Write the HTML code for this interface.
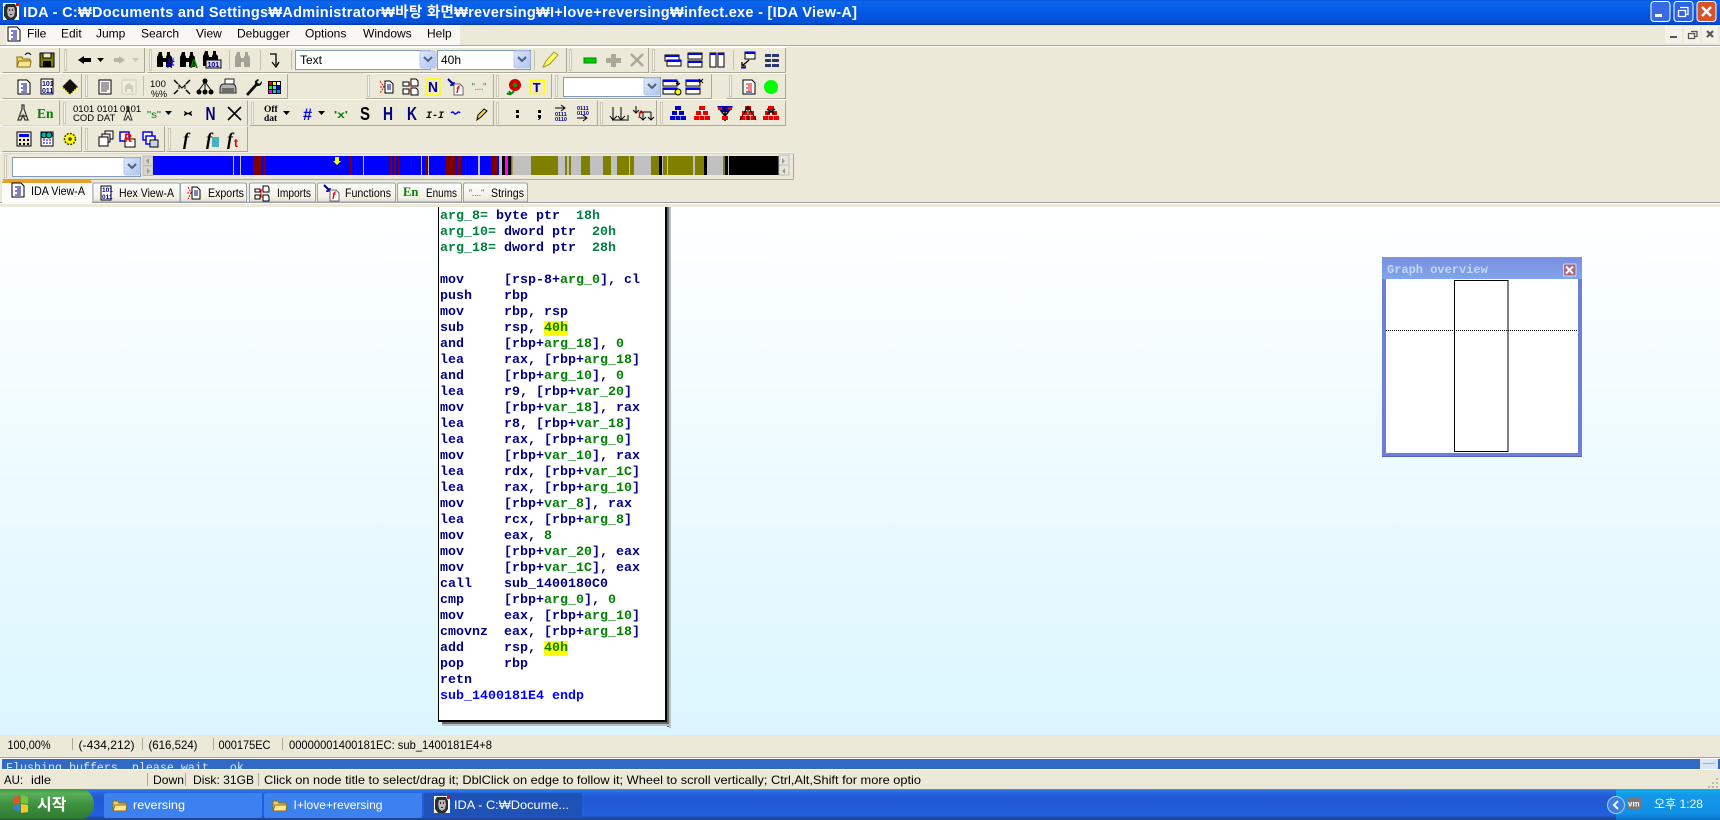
<!DOCTYPE html>
<html><head><meta charset="utf-8"><title>IDA</title>
<style>
html,body{margin:0;padding:0;width:1720px;height:820px;overflow:hidden;background:#ece9d8}
svg{position:absolute;left:0;top:0}
text{font-family:"Liberation Sans","Noto Sans CJK KR",sans-serif;font-size:12px;fill:#000}
.g{fill:#ece9d8;stroke:#aca899;stroke-width:1}
.s{fill:none;stroke:#aca899}
.tab{fill:url(#tabg);stroke:#93a5b5}
.m{font-family:"Liberation Mono",monospace;font-weight:bold}
.w{fill:#fff}
pre{position:absolute;margin:0;left:440px;top:209px;height:511px;overflow:hidden;font:bold 13.333px/16px "Liberation Mono",monospace;color:#000080}
pre i{font-style:normal;color:#007f00}
pre u{text-decoration:none;color:#007f3f}
pre b{color:#007f00;background:#ff0;font-weight:bold}
pre em{font-style:normal;color:#0000ff}
</style></head><body>
<svg width="1720" height="820" viewBox="0 0 1720 820" xmlns="http://www.w3.org/2000/svg">
<defs>
<linearGradient id="ttl" x1="0" y1="0" x2="0" y2="1"><stop offset="0" stop-color="#0a58d8"/><stop offset=".1" stop-color="#0a66ee"/><stop offset=".6" stop-color="#0355e0"/><stop offset=".9" stop-color="#0450d4"/><stop offset="1" stop-color="#0038b0"/></linearGradient>
<linearGradient id="cv" x1="0" y1="0" x2="0" y2="1"><stop offset="0" stop-color="#ffffff"/><stop offset="1" stop-color="#dbf6ff"/></linearGradient>
<linearGradient id="tabg" x1="0" y1="0" x2="0" y2="1"><stop offset="0" stop-color="#fdfdfb"/><stop offset=".8" stop-color="#f2f0e6"/><stop offset="1" stop-color="#dcd9c8"/></linearGradient>
<linearGradient id="tb" x1="0" y1="0" x2="0" y2="1"><stop offset="0" stop-color="#3c8af0"/><stop offset=".1" stop-color="#2a67dc"/><stop offset=".3" stop-color="#2158d6"/><stop offset=".85" stop-color="#2460dc"/><stop offset=".95" stop-color="#1c47a8"/><stop offset="1" stop-color="#444"/></linearGradient>
<linearGradient id="st" x1="0" y1="0" x2="0" y2="1"><stop offset="0" stop-color="#3b9a3b"/><stop offset=".15" stop-color="#5aae5a"/><stop offset=".5" stop-color="#3f923f"/><stop offset="1" stop-color="#2f7a34"/></linearGradient>
<linearGradient id="tray" x1="0" y1="0" x2="0" y2="1"><stop offset="0" stop-color="#0fb0ee"/><stop offset=".2" stop-color="#1298e8"/><stop offset=".8" stop-color="#1290e6"/><stop offset="1" stop-color="#0c6ec4"/></linearGradient>
<linearGradient id="arr" x1="0" y1="0" x2="1" y2="1"><stop offset="0" stop-color="#dfe8fb"/><stop offset="1" stop-color="#aec3ee"/></linearGradient>
<linearGradient id="gov" x1="0" y1="0" x2="0" y2="1"><stop offset="0" stop-color="#7a8ee0"/><stop offset="1" stop-color="#7fa6ea"/></linearGradient>
<g id="ar"><rect x="0" y="0" width="16" height="17" rx="2" fill="url(#arr)" stroke="#b6c8ee"/><path d="M4 6l4 4 4-4" fill="none" stroke="#4d6185" stroke-width="2"/></g>
<g id="doc"><path d="M-6-7h9l3 3v11h-12z" fill="#fff" stroke="#000"/><path d="M-3-3h6M-1-1h4M-3 1h6M-1 3h4M-3 5h6" stroke="#00008b"/></g>
<g id="bin"><path d="M-6-8h3v3l1 2v10h-6v-10l1-2zM2-8h3v3l2 2v10h-6v-10l1-2z" fill="#000"/><rect x="-3" y="-2" width="5" height="4" fill="#000"/></g>
<g id="fold"><path d="M-7-3h5l1 2h7v8h-13z" fill="#f6cf52" stroke="#8a6d1a"/><path d="M-7 7l2-6h12l-1 6z" fill="#ffe88f" stroke="#8a6d1a"/></g>
<g id="win"><rect x="-7" y="-6" width="14" height="6" fill="#fff" stroke="#000"/><rect x="-7" y="-6" width="14" height="2" fill="#00f"/></g>
<g id="tree"><rect x="-3" y="-7" width="6" height="4"/><rect x="-6" y="-2" width="5" height="4"/><rect x="1" y="-2" width="5" height="4"/><rect x="-8" y="3" width="5" height="4"/><rect x="-2.500" y="3" width="5" height="4"/><rect x="3" y="3" width="5" height="4"/></g>
<g id="ida"><rect x="0" y="0" width="16" height="17" fill="#fff"/><path d="M3 1h9l2 4v8l-3 4h-7l-3-4v-9z" fill="#2b2b2b"/><path d="M5 4h6l1 4-1 5-3 2-3-2-1-5z" fill="#b8b8b8"/><path d="M6 6h1v2h-1zM9 6h1v2h-1zM7 11h2v1h-2z" fill="#222"/><rect x="13" y="0" width="3" height="3" fill="#f00"/></g>
</defs>

<!-- title bar -->
<rect width="1720" height="25" fill="url(#ttl)"/>
<use href="#ida" x="3" y="3"/>
<text x="23" y="17" style="fill:#fff;font-weight:bold;font-size:14.500px" textLength="834" lengthAdjust="spacing">IDA - C:₩Documents and Settings₩Administrator₩바탕 화면₩reversing₩I+love+reversing₩infect.exe - [IDA View-A]</text>
<rect x="1651" y="1.500" width="19" height="20" rx="3" fill="#3b69df" stroke="#fff"/><rect x="1655" y="14" width="7" height="3" fill="#fff"/>
<rect x="1674" y="1.500" width="19" height="20" rx="3" fill="#2d62e0" stroke="#fff"/><path d="M1680 7.500h8v7h-2.500M1678.500 10.500h7v6h-7z" fill="none" stroke="#fff" stroke-width="1.300"/>
<rect x="1697" y="1.500" width="19" height="20" rx="3" fill="#d8522a" stroke="#fff"/><path d="M1702 7l9 9M1711 7l-9 9" stroke="#fff" stroke-width="2.400"/>

<!-- menu -->
<rect x="0" y="25" width="1720" height="20" fill="#ece9d8"/>
<rect x="6" y="25" width="454" height="20" fill="#f8f7f2"/>
<use href="#doc" x="14" y="34"/>
<text x="27" y="37.500">File</text><text x="61" y="37.500">Edit</text><text x="96" y="37.500">Jump</text><text x="141" y="37.500">Search</text><text x="196" y="37.500">View</text><text x="237" y="37.500">Debugger</text><text x="305" y="37.500">Options</text><text x="363" y="37.500">Windows</text><text x="427" y="37.500">Help</text>
<rect x="1665" y="26" width="17" height="17" fill="#f4f2e8"/><rect x="1684" y="26" width="16" height="17" fill="#f4f2e8"/><rect x="1702" y="26" width="16" height="17" fill="#f4f2e8"/>
<rect x="1670" y="36" width="7" height="2" fill="#555"/>
<path d="M1691 31.500h6v5h-2M1688.500 33.500h6v5h-6z" fill="none" stroke="#555" stroke-width="1.300"/>
<path d="M1707 31l6 6M1713 31l-6 6" stroke="#555" stroke-width="2.200"/>
<rect x="0" y="45" width="1720" height="1" fill="#a8a79d"/><rect x="0" y="46" width="1720" height="1" fill="#fff"/>

<!-- toolbar groups -->
<g fill="none" stroke="#aca899">
<path d="M59.500 47.500V72.500H2.500"/>
<path d="M144.500 47.500V72.500H62.500M566.500 47.500V72.500H147.500M648.500 47.500V72.500H567.500M785.500 47.500V72.500H650.500"/>
<path d="M81.500 73.500V98.500H2.500M287.500 73.500V98.500H83.500M493.500 73.500V98.500H365.500M551.500 73.500V98.500H494.500M711.500 73.500V98.500H553.500M785.500 73.500V98.500H726.500"/>
<path d="M59.500 100.500V125.500H2.500M247.500 100.500V125.500H61.500M493.500 100.500V125.500H249.500M597.500 100.500V125.500H494.500M656.500 100.500V125.500H598.500M785.500 100.500V125.500H657.500"/>
<path d="M81.500 126.500V151.500H2.500M164.500 126.500V151.500H83.500M247.500 126.500V151.500H166.500"/>
<path d="M793.500 153.500V179.500H2.500M793.500 153.500H2.500"/>
</g>
<g stroke="#fff" fill="none">
<path d="M0 47.500H786M0 73.500H288M365 73.500H786M0 99.500H786M0 126H248M0 153H794"/>
</g>
<!-- grippers -->
<g fill="#f6f5ee" stroke="#cbc8b8" stroke-width="1">
<rect x="64.500" y="49.500" width="2" height="21"/><rect x="149.500" y="49.500" width="2" height="21"/><rect x="569.500" y="49.500" width="2" height="21"/><rect x="652.500" y="49.500" width="2" height="21"/>
<rect x="85.500" y="75.500" width="2" height="21"/><rect x="367.500" y="75.500" width="2" height="21"/><rect x="496.500" y="75.500" width="2" height="21"/><rect x="555.500" y="75.500" width="2" height="21"/><rect x="729.500" y="75.500" width="2" height="21"/>
<rect x="63.500" y="102.500" width="2" height="21"/><rect x="251.500" y="102.500" width="2" height="21"/><rect x="496.500" y="102.500" width="2" height="21"/><rect x="600.500" y="102.500" width="2" height="21"/><rect x="660.500" y="102.500" width="2" height="21"/>
<rect x="85.500" y="128.500" width="2" height="21"/><rect x="168.500" y="128.500" width="2" height="21"/>
<rect x="4.500" y="155.500" width="2" height="22"/>
</g>
<path d="M229.500 50V70M260.500 50V70M291.500 50V70M534.500 50V70M733.500 50V70M143.500 76V96" stroke="#c3c0ae"/>

<!-- row 1 icons -->
<g transform="translate(24,60)"><use href="#fold"/><path d="M1-5q3-4 6 0" fill="none" stroke="#000"/></g>
<g transform="translate(47,60)"><rect x="-7" y="-7" width="14" height="14" fill="#808000" stroke="#000"/><rect x="-4" y="-7" width="8" height="5" fill="#ece9d8" stroke="#000"/><rect x="-4" y="1" width="8" height="6" fill="#000"/></g>
<path d="M78 60l6-4v2h7v4h-7v2z"/><path d="M97 58h7l-3.500 4z"/>
<path d="M125 60l-6-4v2h-5v4h5v2z" fill="#b8b6a6"/><path d="M132 58h7l-3.500 4z" fill="#c8c6b6"/>
<use href="#bin" x="165" y="60"/><text x="166" y="68" class="m" style="fill:#0000e0;font-size:15px">#</text>
<use href="#bin" x="188" y="60"/><text x="190" y="68" class="m" style="fill:#008000;font-size:13px">A</text>
<use href="#bin" x="211" y="59"/><rect x="206" y="60" width="15" height="8" fill="#d8d8e8" stroke="#000"/><text x="207.500" y="67" style="font-size:7px;fill:#000080;font-weight:bold">101</text>
<g opacity=".3"><use href="#bin" x="243" y="60"/></g>
<path d="M270 54h6v11M272 62l4 5 3-5" fill="none" stroke="#000" stroke-width="1.300"/>
<!-- comboboxes row 1 -->
<rect x="295.500" y="50.500" width="135" height="19" fill="#fff" stroke="#7f9db9"/><text x="300" y="64">Text</text><use href="#ar" x="420" y="51"/>
<rect x="437.500" y="50.500" width="93" height="19" fill="#fff" stroke="#7f9db9"/><text x="441" y="64">40h</text><use href="#ar" x="514" y="51"/>
<path d="M543 67l3-6 8-9 4 3-8 9-6 3z" fill="#ffff60" stroke="#a09a30"/>
<rect x="584" y="58" width="12" height="5" fill="#0c0" stroke="#080"/>
<path d="M611 54h5v4h5v5h-5v4h-5v-4h-5v-5h5z" fill="#aca899"/>
<path d="M631 54l12 12M643 54l-12 12" stroke="#aca899" stroke-width="2.500"/>
<g transform="translate(671,60)"><use href="#win" x="1" y="1"/><use href="#win" x="3" y="6"/></g>
<g transform="translate(695,60)"><use href="#win" y="-1"/><use href="#win" y="7"/></g>
<g transform="translate(717,60)"><rect x="-7" y="-7" width="6" height="14" fill="#fff" stroke="#000"/><rect x="-7" y="-7" width="6" height="2" fill="#00f"/><rect x="1" y="-7" width="6" height="14" fill="#fff" stroke="#000"/><rect x="1" y="-7" width="6" height="2" fill="#00f"/></g>
<g transform="translate(748,60)"><rect x="-3" y="-8" width="10" height="7" fill="#fff" stroke="#000"/><rect x="-3" y="-8" width="10" height="2" fill="#00f"/><path d="M1 0l-7 6M-6 2v4h4" fill="none" stroke="#000" stroke-width="1.300"/><rect x="-7" y="7" width="5" height="1.500" fill="#00f"/></g>
<g transform="translate(772,60)" fill="#2a3a6a"><rect x="-7" y="-6" width="6" height="3"/><rect x="0" y="-6" width="7" height="3"/><rect x="-7" y="-1" width="6" height="3"/><rect x="0" y="-1" width="7" height="3"/><rect x="-7" y="4" width="6" height="3"/><rect x="0" y="4" width="7" height="3"/></g>

<!-- row 2 icons -->
<use href="#doc" x="24" y="87"/>
<g transform="translate(47,87)"><path d="M-6-8h12v15h-12z" fill="#fff" stroke="#000"/><text x="-5" y="-1" style="font-size:7px;font-weight:bold;fill:#000080">101</text><text x="-5" y="6" style="font-size:7px;font-weight:bold;fill:#000080">011</text></g>
<g transform="translate(70,87)"><path d="M0-8l8 8-8 8-8-8z" fill="#111"/><path d="M-8 0l8 8 8-8" fill="none" stroke="#ff0" stroke-width="1.500" stroke-dasharray="1.500 1"/></g>
<g transform="translate(105,87)"><rect x="-6" y="-7" width="12" height="14" fill="#fff" stroke="#000"/><path d="M-4-4h8M-4-2h8M-4 0h8M-4 2h8M-4 4h6" stroke="#444"/></g>
<g transform="translate(129,87)" opacity=".45"><rect x="-7" y="-7" width="14" height="14" fill="#f4f2e8" stroke="#aca899"/><path d="M-4 5v-6l4-3 4 3v6h-2v-3h-4v3z" fill="#aca899"/></g>
<text x="150" y="87" style="font-size:9.500px">100</text><text x="151" y="97" style="font-size:9px">%%</text>
<g transform="translate(182,87)" stroke="#000" fill="none"><path d="M-8-7l4 4M8-7l-4 4M-8 7l4-4M8 7l-4-4" stroke-width="1.500"/><path d="M-3 2v-4l3 3 3-3v4"/></g>
<g transform="translate(205,87)"><path d="M0-5l-6 8M0-5l6 8M0-5v8" stroke="#000" fill="none"/><circle cy="-6" r="2.500"/><circle cx="-6" cy="5" r="2.500"/><circle cy="5" r="2.500"/><circle cx="6" cy="5" r="2.500"/></g>
<g transform="translate(228,87)"><path d="M-8 2q0-5 4-5h8q4 0 4 5v4h-16z" fill="#b4b4b4" stroke="#222"/><rect x="-3" y="-8" width="9" height="5" fill="#fff" stroke="#222"/><path d="M-6 2h12M-6 4h12" stroke="#222"/></g>
<path d="M246 94l9-10v-3l3-2 1 1-2 2 2 2 3-3q0 4-3 5h-2l-9 10z" fill="#111"/>
<g transform="translate(268,81)"><rect width="13" height="13" fill="#000"/><rect x="1" y="1" width="3" height="3" fill="#f00"/><rect x="5" y="1" width="3" height="3" fill="#ff0"/><rect x="9" y="1" width="3" height="3" fill="#fff"/><rect x="1" y="5" width="3" height="3" fill="#0f0"/><rect x="5" y="5" width="3" height="3" fill="#0ff"/><rect x="9" y="5" width="3" height="3" fill="#00f"/><rect x="1" y="9" width="3" height="3" fill="#f0f"/><rect x="5" y="9" width="3" height="3" fill="#0cc"/><rect x="9" y="9" width="3" height="3" fill="#08f"/></g>
<g transform="translate(387,87)"><path d="M-7-6l4 6-4 6M-7 0h4" stroke="#e00" fill="none" stroke-dasharray="2 1"/><path d="M-2-6h5l3 3v9h-8z" fill="#fff" stroke="#000"/><path d="M0-2h4M0 0h4M0 2h4" stroke="#00008b"/></g>
<g transform="translate(410,87)"><path d="M-7-5h6v4h-6zM-7 2h6v5h-6z" fill="#fff" stroke="#000"/><path d="M1-8h5l2 2v5h-7zM1 1h5l2 2v5h-7z" fill="#fff" stroke="#000"/><path d="M-1-3h2M-1 4h2" stroke="#e00"/></g>
<rect x="426" y="79" width="14" height="16" fill="#ece9d8" stroke="#ff0" stroke-width="1.500"/><text x="428" y="92" style="fill:#000080;font-size:15px;font-weight:bold" textLength="10" lengthAdjust="spacingAndGlyphs">N</text>
<g transform="translate(456,87)"><path d="M-8-8l6 6" stroke="#00008b" stroke-width="2"/><path d="M-5-1v-1h3v-3" fill="none" stroke="#00008b" stroke-width="1.500"/><path d="M-2-3h6l3 3v8h-9z" fill="#fff" stroke="#666"/><text x="0" y="6" style="font-size:10px;fill:#e00;font-style:italic;font-weight:bold">f</text></g>
<text x="472" y="90" style="fill:#008000;font-size:10px" textLength="14" lengthAdjust="spacingAndGlyphs">"...."</text>
<g transform="translate(515,87)"><circle cy="-2" r="6" fill="#c00"/><circle cy="-2" r="2" fill="#0a0"/><path d="M-1 4q-4 5-7 2M-6 4l2 3" fill="none" stroke="#080" stroke-width="2"/></g>
<rect x="530.500" y="80.500" width="14" height="13" fill="#ece9d8" stroke="#ff0" stroke-width="1.500"/><text x="532.500" y="92" class="m" style="fill:#000080;font-size:14px">T</text>
<rect x="563.500" y="77.500" width="97" height="19" fill="#fff" stroke="#7f9db9"/><use href="#ar" x="644" y="78"/>
<g transform="translate(670,87)"><use href="#win" x="0" y="-1"/><use href="#win" x="0" y="7"/><path d="M8-6v4M6-4l2 2 2-2" stroke="#000" fill="none"/><ellipse cx="8" cy="5" rx="3" ry="3" fill="#ff0" stroke="#000"/></g>
<g transform="translate(693,87)"><use href="#win" x="0" y="-1"/><use href="#win" x="0" y="7"/><path d="M6-8l4 4M10-8l-4 4" stroke="#000"/></g>
<g transform="translate(749,87)"><use href="#doc"/><path d="M-3-3h6M-1-1h4M-3 1h6M-1 3h4" stroke="#e00"/></g>
<circle cx="771" cy="87" r="7" fill="#00ff00"/>

<!-- row 3 icons -->
<g transform="translate(23,113)" fill="none" stroke="#333" stroke-width="1.200"><path d="M-1-8h2v4l4 11h-3l-2-5-2 5h-3l4-11zM-4 3h8"/></g>
<text x="37" y="118" style="font-family:'Liberation Serif',serif;font-weight:bold;font-size:13.500px;fill:#008000">En</text>
<text x="73" y="112" style="font-size:9.500px">0101</text><text x="73" y="121" style="font-size:9.500px">COD</text><text x="97" y="112" style="font-size:9.500px">0101</text><text x="97" y="121" style="font-size:9.500px">DAT</text><text x="120" y="112" style="font-size:9.500px">0101</text>
<path d="M127 107h2v4l3 9h-2l-2-4-2 4h-2l3-9z" fill="none" stroke="#333"/>
<text x="147" y="118" style="fill:#008000;font-size:10px" textLength="14" lengthAdjust="spacingAndGlyphs">"s"</text><path d="M165 111h7l-3.500 4z"/>
<path d="M184 111l2 1 2 1 2-1 2-1v1l-1 1 1 2v1l-2-1-2-1-2 1-2 1v-1l1-2-1-1z"/>
<text x="205.500" y="120" style="fill:#000080;font-size:18px;font-weight:bold" textLength="10" lengthAdjust="spacingAndGlyphs">N</text>
<path d="M228 107l13 13M241 107l-13 13" stroke="#000" stroke-width="1.600"/>
<text x="264" y="112" style="font-weight:bold;font-size:9.500px;font-family:'Liberation Serif',serif">Off</text><text x="264" y="121" style="font-weight:bold;font-size:9.500px;font-family:'Liberation Serif',serif">dat</text>
<path d="M283 111h7l-3.500 4z"/>
<text x="303" y="120" style="fill:#0000e0;font-size:17px;font-weight:bold" textLength="9" lengthAdjust="spacingAndGlyphs">#</text><path d="M318 111h7l-3.500 4z"/>
<text x="334" y="118" style="fill:#008000;font-size:10px;font-weight:bold" textLength="14" lengthAdjust="spacingAndGlyphs">'x'</text>
<text x="360" y="120" style="font-size:18px;font-weight:bold" textLength="10" lengthAdjust="spacingAndGlyphs">S</text>
<text x="383" y="120" style="fill:#000080;font-size:18px;font-weight:bold" textLength="10" lengthAdjust="spacingAndGlyphs">H</text>
<text x="407" y="120" style="fill:#000080;font-size:18px;font-weight:bold" textLength="10" lengthAdjust="spacingAndGlyphs">K</text>
<text x="426" y="118" class="m" style="font-size:10px;font-style:italic">I-I</text>
<path d="M451 113q2-2 3 0t3 0 3 0" fill="none" stroke="#00f" stroke-width="1.500"/>
<path d="M477 120l1-5 6-6 3 2-6 6z" fill="#ffd040" stroke="#000"/>
<rect x="516" y="110" width="3" height="3"/><rect x="516" y="115" width="3" height="3"/>
<rect x="538" y="110" width="3" height="3"/><path d="M538 115h3v3l-2 2h-1l1-2h-1z"/>
<g transform="translate(561,113)"><path d="M-6-5h9M0-8l4 3-4 3" stroke="#000" fill="none"/><text x="-6" y="3" style="font-size:5.500px;fill:#000080;font-weight:bold">0111</text><text x="-6" y="8" style="font-size:5.500px;fill:#000080;font-weight:bold">0110</text></g>
<g transform="translate(583,113)"><text x="-6" y="-3" style="font-size:5.500px;fill:#000080;font-weight:bold">0111</text><text x="-6" y="2" style="font-size:5.500px;fill:#000080;font-weight:bold">0110</text><path d="M-6 5h9M0 2l4 3-4 3" stroke="#000" fill="none"/></g>
<path d="M613 107v12M617 116l-4 4-3-4M621 107v12M625 116l-4 4-3-4M628 119v-4M612 120h17" stroke="#000" fill="none"/>
<path d="M636 106v7M633 110l3 3 3-3M643 112v8M646 117l-3 3-3-3M651 112v8M654 117l-3 3-3-3M640 112h11" stroke="#000" fill="none"/><text x="638" y="118" style="font-size:10px;font-style:italic;font-weight:bold;fill:#e00">f</text>
<use href="#tree" x="678" y="113" fill="#00c"/>
<use href="#tree" x="702" y="113" fill="#e00"/>
<g transform="translate(725,113)"><path d="M-8-7h16l-5 6h-6z" fill="#00c"/><path d="M-7-6l7 9M7-6l-7 9M0-6v14" stroke="#000" stroke-width="1.500"/><rect x="-7" y="-6" width="4" height="3" fill="#e00"/><rect x="3" y="-6" width="4" height="3" fill="#e00"/><rect x="-3" y="3" width="6" height="4" fill="#e00"/></g>
<g transform="translate(748,113)"><use href="#tree" fill="#e00"/><path d="M0-7l-8 14M0-7l8 14M0-7v14" stroke="#000"/></g>
<g transform="translate(771,113)"><use href="#tree" fill="#e00"/><path d="M-4-4l8 5M4-4l-8 5" stroke="#000" stroke-width="1.500"/></g>

<!-- row 4 icons -->
<g transform="translate(24,139)"><rect x="-7" y="-7" width="14" height="14" fill="#ece9d8" stroke="#000"/><rect x="-5" y="-5" width="10" height="3" fill="#00f"/><path d="M-5 0h2v2h-2zM-1 0h2v2h-2zM3 0h2v2h-2zM-5 4h2v2h-2zM-1 4h2v2h-2zM3 4h2v2h-2z"/></g>
<g transform="translate(47,139)"><path d="M-6-7h12v14h-12z" fill="#fff" stroke="#000"/><circle cx="-3" cy="-4" r="3" fill="#00b0b0" stroke="#000"/><circle cx="2" cy="-4" r="3" fill="#00b0b0" stroke="#000"/><path d="M-4 1h8M-4 4h8" stroke="#00f" stroke-dasharray="2 1"/></g>
<g transform="translate(70,139)"><circle r="5.500" fill="#ff0" stroke="#404000" stroke-width="1.500" stroke-dasharray="2 1.200"/><circle r="1.800" fill="#404000"/></g>
<g transform="translate(106,139)"><rect x="-1" y="-8" width="8" height="8" fill="#fff" stroke="#000"/><rect x="-4" y="-5" width="8" height="8" fill="#ece9d8" stroke="#000"/><rect x="-7" y="-2" width="9" height="9" fill="#fff" stroke="#000"/></g>
<g transform="translate(127,139)"><rect x="-7" y="-7" width="9" height="9" fill="#fff" stroke="#00f" stroke-width="1.500"/><rect x="-2" y="0" width="10" height="8" fill="#fff" stroke="#000"/><text x="-3" y="3" class="m" style="font-size:13px;fill:#f00">R</text></g>
<g transform="translate(150,139)"><rect x="-7" y="-7" width="9" height="8" fill="#fff" stroke="#00f" stroke-width="1.500"/><rect x="-4" y="-3" width="9" height="8" fill="#fff" stroke="#00f" stroke-width="1.500"/><rect x="0" y="1" width="8" height="7" fill="#c8d8f0" stroke="#000"/></g>
<text x="183" y="145" style="font-family:'Liberation Serif',serif;font-weight:bold;font-style:italic;font-size:18px">f</text>
<text x="206" y="145" style="font-family:'Liberation Serif',serif;font-weight:bold;font-style:italic;font-size:18px">f</text><rect x="212" y="137" width="7" height="10" fill="#48b0c0"/>
<text x="227" y="145" style="font-family:'Liberation Serif',serif;font-weight:bold;font-style:italic;font-size:18px">f</text><text x="234" y="147" style="font-size:12px;font-weight:bold;fill:#e00">t</text>

<!-- row 5 -->
<rect x="12.500" y="157.500" width="128" height="19" fill="#fff" stroke="#7f9db9"/><use href="#ar" x="124" y="158"/>
<rect x="143" y="156" width="10" height="9.500" fill="#d8d6c8" stroke="#bbb"/><rect x="143" y="166" width="10" height="9.500" fill="#d8d6c8" stroke="#bbb"/>
<path d="M149 158l-3 3 3 3zM147 168l3 3-3 3z" fill="#999"/>
<rect x="153" y="156" width="626" height="19" fill="#0000ff"/>
<g fill="#800000">
<rect x="240" y="156" width="1" height="19" fill="#c0c0c0"/><rect x="233" y="156" width="1" height="19" fill="#c0c0c0"/>
<rect x="253" y="156" width="9" height="19"/><rect x="263" y="156" width="3" height="19"/>
<rect x="350" y="156" width="1.500" height="19"/><rect x="355" y="156" width="1" height="19"/><rect x="363" y="156" width="1" height="19" fill="#c0c0c0"/>
<rect x="390" y="156" width="2" height="19"/><rect x="394" y="156" width="2" height="19"/><rect x="398" y="156" width="1" height="19"/><rect x="411" y="156" width="1" height="19"/><rect x="421" y="156" width="1" height="19" fill="#c0c0c0"/><rect x="425" y="156" width="2" height="19"/><rect x="428" y="156" width="1" height="19" fill="#c0c0c0"/>
<rect x="446" y="156" width="9" height="19"/><rect x="457" y="156" width="4" height="19"/><rect x="465" y="156" width="1" height="19"/>
<rect x="478" y="156" width="2" height="19" fill="#c0c0c0"/><rect x="492" y="156" width="1.500" height="19"/><rect x="494" y="156" width="3" height="19"/>
</g>
<rect x="499" y="156" width="3" height="19" fill="#c0c0c0"/><rect x="502" y="156" width="3" height="19" fill="#000"/><rect x="505" y="156" width="3" height="19" fill="#f0f"/><rect x="508" y="156" width="3" height="19" fill="#000"/>
<rect x="511" y="156" width="268" height="19" fill="#c0c0c0"/>
<g fill="#808000">
<rect x="511" y="156" width="1.500" height="19"/><rect x="531" y="156" width="27" height="19"/><rect x="565" y="156" width="2" height="19"/><rect x="569" y="156" width="2" height="19"/><rect x="581" y="156" width="9" height="19"/><rect x="603" y="156" width="8" height="19"/><rect x="617" y="156" width="12" height="19"/><rect x="630" y="156" width="4" height="19"/><rect x="651" y="156" width="8" height="19"/><rect x="663" y="156" width="4" height="19"/><rect x="668" y="156" width="25" height="19"/><rect x="695" y="156" width="9" height="19"/><rect x="723" y="156" width="2" height="19"/>
</g>
<g fill="#000"><rect x="659" y="156" width="3" height="19"/><rect x="704" y="156" width="3" height="19"/><rect x="725" y="156" width="3" height="19"/><rect x="729" y="156" width="50" height="19"/></g>
<rect x="779" y="155" width="10" height="10" fill="#e8e6da" stroke="#bbb"/><rect x="779" y="165" width="10" height="10" fill="#e8e6da" stroke="#bbb"/>
<path d="M782 158l3 3-3 3zM785 168l-3 3 3 3z" fill="#999"/>
<path d="M335 157h4v4h2l-4 4-4-4h2z" fill="#ffff00"/>

<!-- tabs -->
<path d="M93 202V185q0-2 2-2h83q2 0 2 2v17z" class="tab"/>
<path d="M180.500 202V185q0-2 2-2h62q2 0 2 2v17z" class="tab"/>
<path d="M249.500 202V185q0-2 2-2h62q2 0 2 2v17z" class="tab"/>
<path d="M317.500 202V185q0-2 2-2h74q2 0 2 2v17z" class="tab"/>
<path d="M397.500 202V185q0-2 2-2h60q2 0 2 2v17z" class="tab"/>
<path d="M463.500 202V185q0-2 2-2h60q2 0 2 2v17z" class="tab"/>
<rect x="0" y="202" width="1720" height="1" fill="#9aa0a8"/><rect x="0" y="203" width="1720" height="1" fill="#fff"/><rect x="0" y="204" width="1720" height="3" fill="#ece9d8"/>
<path d="M2 203V183q0-2 2-3h86q2 1 2 3v20z" fill="#fcfcfa"/>
<path d="M2 183q0-3 3-3h84q3 0 3 3v0H2z" fill="#e6a02a"/>
<use href="#doc" x="18" y="190"/>
<text x="31" y="195" textLength="54" lengthAdjust="spacingAndGlyphs">IDA View-A</text>
<g transform="translate(106,193)"><path d="M-5-7h10v14h-10z" fill="#fff" stroke="#000"/><text x="-4" y="-1" style="font-size:6.500px;font-weight:bold;fill:#000080">101</text><text x="-4" y="6" style="font-size:6.500px;font-weight:bold;fill:#000080">011</text></g>
<text x="119" y="197" textLength="55" lengthAdjust="spacingAndGlyphs">Hex View-A</text>
<g transform="translate(194,193)"><path d="M-6-6l3 6-3 6M-7 0h4" stroke="#e00" fill="none" stroke-dasharray="2 1"/><path d="M-2-6h5l3 3v9h-8z" fill="#fff" stroke="#000"/><path d="M0-2h4M0 0h4M0 2h4" stroke="#00008b"/></g>
<text x="208" y="197" textLength="36" lengthAdjust="spacingAndGlyphs">Exports</text>
<g transform="translate(262,193)"><path d="M-7-4h5v3h-5zM-7 2h5v4h-5z" fill="#fff" stroke="#000"/><path d="M1-7h5l1 2v4h-6zM1 2h5l1 2v4h-6z" fill="#fff" stroke="#000"/><path d="M-2-3h3M-2 4h3M-1-3v7" stroke="#e00"/></g>
<text x="277" y="197" textLength="34" lengthAdjust="spacingAndGlyphs">Imports</text>
<g transform="translate(332,193)"><path d="M-8-8l5 5" stroke="#00008b" stroke-width="2"/><path d="M-5-1v-1h3v-3" fill="none" stroke="#00008b" stroke-width="1.500"/><path d="M-2-3h6l3 3v8h-9z" fill="#fff" stroke="#666"/><text x="0" y="6" style="font-size:10px;fill:#e00;font-style:italic;font-weight:bold">f</text></g>
<text x="345" y="197" textLength="46" lengthAdjust="spacingAndGlyphs">Functions</text>
<text x="403" y="196" style="font-family:'Liberation Serif',serif;font-weight:bold;font-size:12.500px;fill:#008000">En</text><text x="426" y="197" textLength="31" lengthAdjust="spacingAndGlyphs">Enums</text>
<text x="469" y="196" style="fill:#008000;font-size:9px" textLength="15" lengthAdjust="spacingAndGlyphs">"...."</text><text x="491" y="197" textLength="33" lengthAdjust="spacingAndGlyphs">Strings</text>

<!-- canvas -->
<rect x="0" y="207" width="1720" height="528" fill="url(#cv)"/>
<rect x="438" y="207" width="229" height="515" fill="#fff"/>
<rect x="438" y="207" width="1" height="515" fill="#000"/>
<rect x="665" y="207" width="2" height="515" fill="#000"/><rect x="438" y="720" width="229" height="2" fill="#000"/>
<rect x="667" y="207" width="2" height="520" fill="#666"/><rect x="669" y="207" width="2" height="521" fill="#b4c0c4"/>
<rect x="442" y="722" width="227" height="2" fill="#666"/><rect x="442" y="724" width="229" height="2" fill="#b4c0c4"/>

<!-- graph overview -->
<rect x="1382" y="257" width="200" height="200" fill="#6c7ed8"/>
<rect x="1382" y="257" width="200" height="1" fill="#8094e0"/><rect x="1382" y="456" width="200" height="1" fill="#5262c4"/>
<rect x="1382" y="258" width="200" height="21" fill="url(#gov)"/>
<rect x="1386" y="279" width="192" height="174" fill="#fff"/>
<text x="1387" y="273" class="m" style="font-size:12px;fill:#c4d8fb">Graph overview</text>
<rect x="1563.500" y="264" width="12.500" height="12" rx="1" fill="#a8687e" stroke="#cfd8f8"/><path d="M1566 266.500l7 7M1573 266.500l-7 7" stroke="#fff" stroke-width="2"/>
<rect x="1454.500" y="280.500" width="53.500" height="171" fill="none" stroke="#000"/>
<path d="M1386 330.500H1578" stroke="#000" stroke-dasharray="1 1"/>

<!-- status -->
<rect x="0" y="735" width="1720" height="22" fill="#ece9d8"/>
<path d="M72.500 738V750M142.500 738V750M213.500 738V750M282.500 738V750" stroke="#aca899"/>
<text x="7.500" y="749" textLength="43" lengthAdjust="spacingAndGlyphs">100,00%</text><text x="78.500" y="749" textLength="56" lengthAdjust="spacingAndGlyphs">(-434,212)</text><text x="148.500" y="749" textLength="49" lengthAdjust="spacingAndGlyphs">(616,524)</text><text x="218.500" y="749" textLength="52" lengthAdjust="spacingAndGlyphs">000175EC</text><text x="289" y="749" textLength="203" lengthAdjust="spacingAndGlyphs">00000001400181EC: sub_1400181E4+8</text>
<rect x="0" y="757" width="1720" height="1" fill="#a4a4a8"/><rect x="0" y="758" width="1720" height="1" fill="#fff"/>
<rect x="2" y="759" width="1718" height="10" fill="#316ac5"/>
<svg x="0" y="759" width="1700" height="10" viewBox="0 759 1700 10"><text x="6" y="771" class="m" style="font-size:11.667px;font-weight:normal;fill:#dbe6fb">Flushing buffers, please wait...ok</text></svg>
<rect x="1700" y="759" width="18" height="10" fill="#dbe5f8"/><rect x="1703" y="763" width="12" height="1" fill="#9bb0e0"/>
<rect x="0" y="769" width="1720" height="1" fill="#fff"/>
<rect x="0" y="770" width="1720" height="19" fill="#ece9d8"/>
<path d="M147.500 773V786M185.500 773V786M258.500 773V786" stroke="#aca899"/>
<text x="4" y="784" textLength="19" lengthAdjust="spacingAndGlyphs">AU:</text><text x="31" y="784" textLength="20" lengthAdjust="spacingAndGlyphs">idle</text><text x="153" y="784" textLength="31" lengthAdjust="spacingAndGlyphs">Down</text><text x="193" y="784" textLength="61" lengthAdjust="spacingAndGlyphs">Disk: 31GB</text><text x="264" y="784" textLength="657" lengthAdjust="spacingAndGlyphs">Click on node title to select/drag it; DblClick on edge to follow it; Wheel to scroll vertically; Ctrl,Alt,Shift for more optio</text>
<path d="M1716 778h2v2h-2zM1712 782h2v2h-2zM1716 782h2v2h-2zM1708 786h2v2h-2zM1712 786h2v2h-2zM1716 786h2v2h-2z" fill="#bdb9a6"/>

<!-- taskbar -->
<rect x="0" y="789" width="1720" height="31" fill="url(#tb)"/>
<path d="M0 789H84q10 5 10 15t-10 15H0z" fill="url(#st)"/>
<g transform="translate(12,795)"><path d="M1 3l7-3v8l-7 2z" fill="#e8512a"/><path d="M9 0l7 2v7l-7-1z" fill="#7ec13a"/><path d="M1 11l7-2v8l-7-3z" fill="#3a7fe0"/><path d="M9 9l7 1v7l-7 1z" fill="#f8c628"/></g>
<text x="37" y="810" style="fill:#fff;font-size:16px;font-weight:bold">시작</text>
<rect x="104" y="793" width="158" height="25" rx="2" fill="#3c81f0"/><rect x="264" y="793" width="158" height="25" rx="2" fill="#3c81f0"/>
<rect x="424" y="793" width="158" height="25" rx="2" fill="#1e52b7"/>
<use href="#fold" x="120" y="804"/><use href="#fold" x="280" y="804"/><use href="#ida" x="434" y="796"/>
<text x="133" y="809" class="w" textLength="52" lengthAdjust="spacingAndGlyphs">reversing</text><text x="293.500" y="809" class="w" textLength="89" lengthAdjust="spacingAndGlyphs">I+love+reversing</text><text x="454" y="809" class="w" textLength="115" lengthAdjust="spacingAndGlyphs">IDA - C:₩Docume...</text>
<rect x="1616" y="789" width="104" height="31" fill="url(#tray)"/>
<circle cx="1616" cy="805" r="8.500" fill="#3a7fe0" stroke="#a8d0f8"/>
<path d="M1618 801l-4 4 4 4" fill="none" stroke="#fff" stroke-width="2"/>
<rect x="1627" y="797" width="14" height="12" rx="1" fill="#787878"/>
<text x="1628" y="806.500" style="fill:#fff;font-size:8px;font-weight:bold">vm</text>
<text x="1654" y="808" class="w" textLength="49" lengthAdjust="spacingAndGlyphs">오후 1:28</text>
</svg>
<pre><u>arg_8=</u> byte ptr  <u>18h</u>
<u>arg_10=</u> dword ptr  <u>20h</u>
<u>arg_18=</u> dword ptr  <u>28h</u>

mov     [rsp-8+<i>arg_0</i>], cl
push    rbp
mov     rbp, rsp
sub     rsp, <b>40h</b>
and     [rbp+<i>arg_18</i>], <i>0</i>
lea     rax, [rbp+<i>arg_18</i>]
and     [rbp+<i>arg_10</i>], <i>0</i>
lea     r9, [rbp+<i>var_20</i>]
mov     [rbp+<i>var_18</i>], rax
lea     r8, [rbp+<i>var_18</i>]
lea     rax, [rbp+<i>arg_0</i>]
mov     [rbp+<i>var_10</i>], rax
lea     rdx, [rbp+<i>var_1C</i>]
lea     rax, [rbp+<i>arg_10</i>]
mov     [rbp+<i>var_8</i>], rax
lea     rcx, [rbp+<i>arg_8</i>]
mov     eax, <i>8</i>
mov     [rbp+<i>var_20</i>], eax
mov     [rbp+<i>var_1C</i>], eax
call    sub_1400180C0
cmp     [rbp+<i>arg_0</i>], <i>0</i>
mov     eax, [rbp+<i>arg_10</i>]
cmovnz  eax, [rbp+<i>arg_18</i>]
add     rsp, <b>40h</b>
pop     rbp
retn
<em>sub_1400181E4 endp</em></pre>
</body></html>
